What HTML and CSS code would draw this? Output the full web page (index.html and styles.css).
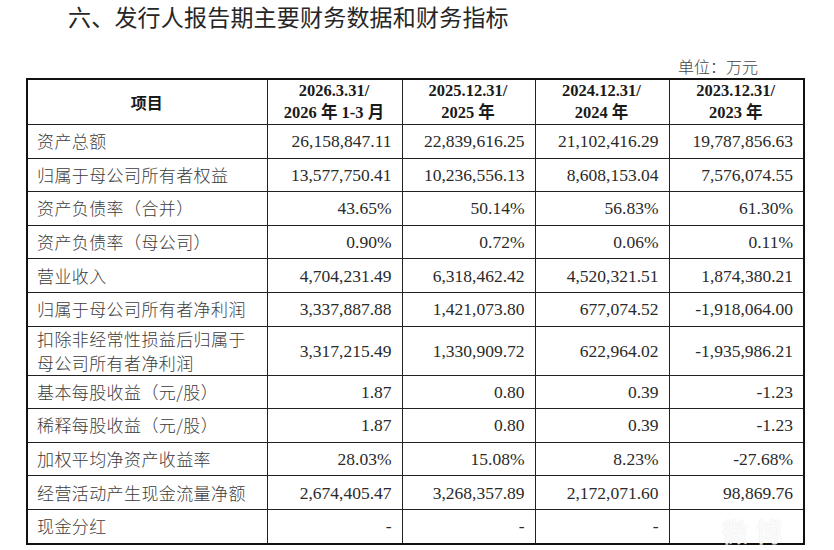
FILE: index.html
```html
<!DOCTYPE html>
<html lang="zh-CN">
<head>
<meta charset="utf-8">
<title>发行人报告期主要财务数据和财务指标</title>
<link rel="stylesheet" href="styles.css">
</head>
<body>
<div class="page">
  <h1 class="title">六、发行人报告期主要财务数据和财务指标</h1>
  <div class="unit">单位：万元</div>
  <table class="fin">
    <colgroup>
      <col class="c1"><col class="c2"><col class="c3"><col class="c4"><col class="c5">
    </colgroup>
    <thead>
      <tr class="head">
        <th class="item">项目</th>
        <th>2026.3.31/<br>2026 年 1-3 月</th>
        <th>2025.12.31/<br>2025 年</th>
        <th>2024.12.31/<br>2024 年</th>
        <th>2023.12.31/<br>2023 年</th>
      </tr>
    </thead>
    <tbody>
      <tr><td class="label">资产总额</td><td>26,158,847.11</td><td>22,839,616.25</td><td>21,102,416.29</td><td>19,787,856.63</td></tr>
      <tr><td class="label">归属于母公司所有者权益</td><td>13,577,750.41</td><td>10,236,556.13</td><td>8,608,153.04</td><td>7,576,074.55</td></tr>
      <tr><td class="label">资产负债率（合并）</td><td>43.65%</td><td>50.14%</td><td>56.83%</td><td>61.30%</td></tr>
      <tr><td class="label">资产负债率（母公司）</td><td>0.90%</td><td>0.72%</td><td>0.06%</td><td>0.11%</td></tr>
      <tr><td class="label">营业收入</td><td>4,704,231.49</td><td>6,318,462.42</td><td>4,520,321.51</td><td>1,874,380.21</td></tr>
      <tr><td class="label">归属于母公司所有者净利润</td><td>3,337,887.88</td><td>1,421,073.80</td><td>677,074.52</td><td>-1,918,064.00</td></tr>
      <tr class="double"><td class="label">扣除非经常性损益后归属于<br>母公司所有者净利润</td><td>3,317,215.49</td><td>1,330,909.72</td><td>622,964.02</td><td>-1,935,986.21</td></tr>
      <tr><td class="label">基本每股收益（元/股）</td><td>1.87</td><td>0.80</td><td>0.39</td><td>-1.23</td></tr>
      <tr><td class="label">稀释每股收益（元/股）</td><td>1.87</td><td>0.80</td><td>0.39</td><td>-1.23</td></tr>
      <tr><td class="label">加权平均净资产收益率</td><td>28.03%</td><td>15.08%</td><td>8.23%</td><td>-27.68%</td></tr>
      <tr><td class="label">经营活动产生现金流量净额</td><td>2,674,405.47</td><td>3,268,357.89</td><td>2,172,071.60</td><td>98,869.76</td></tr>
      <tr><td class="label">现金分红</td><td>-</td><td>-</td><td>-</td><td></td></tr>
    </tbody>
  </table>
  <div class="watermark">微博</div>
</div>
</body>
</html>
```
FILE: styles.css
```css
html, body {
  margin: 0;
  padding: 0;
  background: #ffffff;
}

.page {
  position: relative;
  width: 834px;
  height: 550px;
  overflow: hidden;
}

.title {
  margin: 0;
  padding-left: 68px;
  height: 32px;
  line-height: 32px;
  font-family: "Noto Sans CJK SC", sans-serif;
  font-size: 23px;
  font-weight: 400;
  color: #262626;
  letter-spacing: 0.2px;
}

.unit {
  margin-top: 24px;
  width: 758px;
  height: 20px;
  line-height: 20px;
  text-align: right;
  font-family: "Noto Sans CJK SC", sans-serif;
  font-size: 16px;
  font-weight: 300;
  color: #444;
}

.fin {
  margin: 2px 0 0 26px;
  width: 777px;
  border-collapse: collapse;
  table-layout: fixed;
  border: 2px solid #111;
  font-family: "Liberation Serif", "Noto Sans CJK SC", serif;
  font-size: 17.5px;
  color: #2a2a2a;
}

.c1 { width: 240px; }
.c2 { width: 135px; }
.c3 { width: 133px; }
.c4 { width: 134px; }
.c5 { width: 135px; }

.fin th,
.fin td {
  border: 1px solid #222;
  padding: 0 10px 0 9px;
  vertical-align: middle;
}

.fin td {
  text-align: right;
  height: 32.6px;
  line-height: 22px;
}

.fin .head th {
  height: 43px;
  font-weight: 700;
  font-size: 16.5px;
  line-height: 22px;
  text-align: center;
  color: #1a1a1a;
}

.fin .head th.item {
  font-family: "Noto Sans CJK SC", sans-serif;
  font-size: 16px;
}

.fin .double td {
  height: 46px;
}

.fin td.label {
  text-align: left;
  font-family: "Noto Sans CJK SC", sans-serif;
  font-size: 17px;
  font-weight: 300;
  line-height: 24px;
  color: #3c3c3c;
  letter-spacing: 0.4px;
  white-space: nowrap;
}

.watermark {
  position: absolute;
  left: 722px;
  top: 512px;
  font-family: "Noto Sans CJK SC", sans-serif;
  font-size: 26px;
  font-weight: 700;
  letter-spacing: 8px;
  color: rgba(255, 255, 255, 0.85);
  text-shadow: 0 0 1px rgba(0, 0, 0, 0.12);
}
```
